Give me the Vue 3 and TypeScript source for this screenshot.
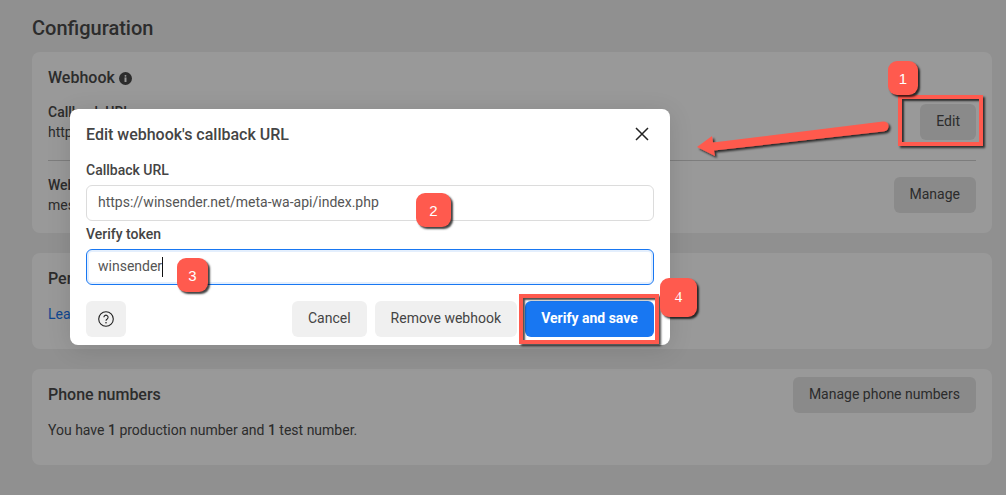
<script setup lang="ts">
const badges = [
  { n: 1, cls: 'b1' },
  { n: 2, cls: 'b2' },
  { n: 3, cls: 'b3' },
  { n: 4, cls: 'b4' },
]
</script>

<template>
  <div class="stage">
    <main class="page">
      <h1 class="page-title">Configuration</h1>

      <section class="card webhook">
        <h2 class="card-title">Webhook
          <svg class="info" viewBox="0 0 12 12" width="13" height="13" aria-hidden="true">
            <circle cx="6" cy="6" r="6" fill="currentColor" />
            <rect x="5.1" y="5" width="1.8" height="4.2" fill="#fff" />
            <rect x="5.1" y="2.7" width="1.8" height="1.6" rx=".8" fill="#fff" />
          </svg>
        </h2>
        <div class="row cb-row">
          <div class="col">
            <div class="label">Callback URL</div>
            <div class="val">https://winsender.net/meta-wa-api/index.php</div>
          </div>
          <div class="col verify-col">
            <div class="label">Verify token</div>
          </div>
          <button class="btn edit">Edit</button>
        </div>
        <hr class="divider" />
        <div class="row fields-row">
          <div class="col">
            <div class="label">Webhook fields</div>
            <div class="val">messages</div>
          </div>
          <button class="btn">Manage</button>
        </div>
      </section>

      <section class="card perm">
        <h2 class="card-title">Permissions</h2>
        <a class="link">Learn more</a>
      </section>

      <section class="card phone">
        <div class="row phone-row">
          <h2 class="card-title">Phone numbers</h2>
          <button class="btn">Manage phone numbers</button>
        </div>
        <p class="phone-text">You have <b>1</b> production number and <b>1</b> test number.</p>
      </section>
    </main>

    <div class="scrim"></div>

    <div class="modal">
      <header class="modal-head">
        <h3 class="modal-title">Edit webhook's callback URL</h3>
        <svg class="close" viewBox="0 0 14 14" width="14" height="14" aria-hidden="true">
          <path d="M1 1 13 13M13 1 1 13" stroke="#222" stroke-width="1.5" fill="none" />
        </svg>
      </header>
      <div class="field-label first">Callback URL</div>
      <div class="input">https://winsender.net/meta-wa-api/index.php</div>
      <div class="field-label second">Verify token</div>
      <div class="input focus">winsender<span class="caret"></span></div>
      <footer class="modal-foot">
        <button class="mbtn help" aria-label="Help">
          <svg viewBox="0 0 16 16" width="16" height="16" aria-hidden="true">
            <circle cx="8" cy="8" r="7.3" stroke="#222" stroke-width="1.1" fill="none" />
            <path d="M5.9 6.3a2.1 2.1 0 1 1 3.3 1.7c-.8.5-1.2.9-1.2 1.8" stroke="#222" stroke-width="1.1" fill="none" />
            <circle cx="8" cy="11.7" r=".8" fill="#222" />
          </svg>
        </button>
        <span class="spacer"></span>
        <button class="mbtn">Cancel</button>
        <button class="mbtn">Remove webhook</button>
        <button class="mbtn primary">Verify and save</button>
      </footer>
    </div>

    <svg class="arrow" width="1006" height="495" viewBox="0 0 1006 495" aria-hidden="true">
      <defs>
        <filter id="sh" x="-10%" y="-30%" width="120%" height="170%">
          <feDropShadow dx="2" dy="2" stdDeviation="1" flood-color="#000" flood-opacity=".75" />
        </filter>
      </defs>
      <path filter="url(#sh)" fill="#ff5a4e"
        d="M697 147 L712 136 L713 142.5 L883 121.5 Q888.5 121.5 888.5 126 Q888.5 131 883 131.5 L714 150.5 L715 156 Z" />
    </svg>
    <div class="rect r-edit"></div>
    <div class="rect r-verify"></div>
    <div v-for="b in badges" :key="b.n" class="badge" :class="b.cls">{{ b.n }}</div>
  </div>
</template>

<style>
html, body { margin: 0; }
</style>

<style scoped>
.stage {
  position: relative;
  width: 1006px;
  height: 495px;
  overflow: hidden;
  background: #f0f0f0;
  font-family: Roboto, "Liberation Sans", sans-serif;
  color: #4a4a4a;
  font-size: 14px;
}
.page { padding: 0 14px 0 32px; }
.page-title {
  margin: 0;
  padding-top: 16px;
  height: 36px;
  font-size: 20px;
  line-height: 24px;
  font-weight: 500;
}
.card {
  background: #fff;
  border-radius: 8px;
  padding: 16px;
  box-sizing: border-box;
}
.webhook { height: 181px; }
.perm { height: 96px; margin-top: 20px; }
.phone { height: 96px; margin-top: 20px; padding-top: 8px; }
.card-title {
  margin: 0;
  font-size: 16px;
  line-height: 20px;
  font-weight: 500;
  display: flex;
  align-items: center;
  gap: 4px;
}
.info { color: #4a4a4a; }
.row { display: flex; align-items: center; }
.col { flex: 0 0 438px; line-height: 20px; }
.verify-col { flex: 1; }
.label { font-weight: 500; }
.cb-row { margin-top: 16px; height: 36px; }
.divider { border: 0; border-top: 1px solid #d0d0d0; margin: 20px 0 16px; }
.fields-row { justify-content: space-between; height: 36px; }
.fields-row .col { flex: 1; }
.btn {
  height: 36px;
  padding: 0 16px 2px;
  border: 0;
  border-radius: 6px;
  background: #e6e6e6;
  color: #4a4a4a;
  font: 400 14px Roboto, sans-serif;
  flex: none;
}
.link { display: block; margin-top: 15px; color: #1877f2; line-height: 20px; }
.phone-row { justify-content: space-between; }
.phone-text { margin: 7px 0 0; font-size: 14px; line-height: 20px; }
.phone-text b { font-weight: 500; }

.scrim { position: absolute; inset: 0; background: rgba(0, 0, 0, .4); }

.modal {
  position: absolute;
  left: 70px;
  top: 109px;
  width: 600px;
  height: 236px;
  box-sizing: border-box;
  padding: 0 16px;
  background: #fff;
  border-radius: 8px;
  color: #444;
  box-shadow: 0 4px 24px rgba(0, 0, 0, .12);
}
.modal-head { display: flex; align-items: center; justify-content: space-between; height: 50px; padding-right: 5px; }
.modal-title { margin: 0; font-size: 16px; font-weight: 500; }
.field-label { font-weight: 500; line-height: 18px; }
.field-label.first { margin-top: 2px; height: 24px; }
.field-label.second { margin-top: 4px; height: 24px; }
.input {
  box-sizing: border-box;
  height: 36px;
  border: 1px solid #dcdcdc;
  border-radius: 6px;
  padding: 0 11px;
  line-height: 33px;
  color: #555;
}
.input.focus { border-color: #1877f2; box-shadow: inset 0 0 0 2px #e4effd; position: relative; }
.caret { display: inline-block; width: 1px; height: 20px; background: #111; vertical-align: middle; }
.modal-foot { display: flex; gap: 8px; margin-top: 16px; }
.spacer { flex: 1; }
.mbtn {
  height: 36px;
  padding: 0 16px 2px;
  border: 0;
  border-radius: 6px;
  background: #f0f0f0;
  color: #444;
  font: 400 14px Roboto, sans-serif;
}
.help { width: 40px; padding: 0; display: flex; align-items: center; justify-content: center; }
.primary { background: #1877f2; color: #fff; font-weight: 700; width: 129px; padding: 0 0 2px; }

.arrow { position: absolute; left: 0; top: 0; pointer-events: none; }
.rect {
  position: absolute;
  box-sizing: border-box;
  border: 4px solid #ff5a4e;
  box-shadow: 2px 2px 2px rgba(0, 0, 0, .7), inset 2px 2px 2px rgba(0, 0, 0, .7);
}
.r-edit { left: 898px; top: 95px; width: 85px; height: 51px; }
.r-verify { left: 519px; top: 294px; width: 140px; height: 50px; }
.badge {
  position: absolute;
  display: flex;
  align-items: center;
  justify-content: center;
  background: #ff5a4e;
  border-radius: 9px;
  color: #fff;
  font: 15px "Liberation Sans", sans-serif;
  box-shadow: 2px 2px 2px rgba(0, 0, 0, .75);
}
.b1 { left: 888px; top: 61px; width: 30px; height: 34px; }
.b2 { left: 416px; top: 193px; width: 35px; height: 34px; }
.b3 { left: 177px; top: 258px; width: 31px; height: 34px; }
.b4 { left: 660px; top: 278px; width: 37px; height: 39px; font-family: "Liberation Serif", serif; }
</style>
